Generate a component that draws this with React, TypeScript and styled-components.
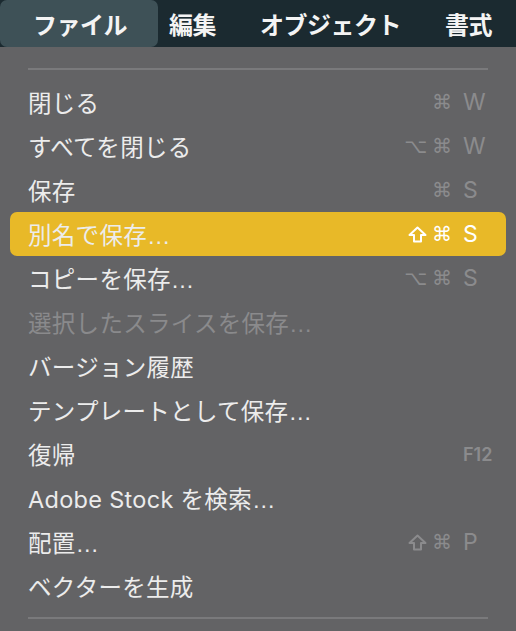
import React from "react";
import styled, { createGlobalStyle } from "styled-components";

const GlobalStyle = createGlobalStyle`
  html, body {
    margin: 0;
    padding: 0;
    background: #636365;
    overflow: hidden;
  }
  body {
    font-family: "Inter", "Noto Sans CJK JP", sans-serif;
  }
`;

const Page = styled.div`
  width: 516px;
  height: 631px;
  background: #636365;
  display: flex;
  flex-direction: column;
`;

// top menu bar
const MenuBar = styled.div`
  height: 47px;
  background: #1b2a30;
  display: flex;
  align-items: stretch;
`;

const BarItem = styled.div<{ $active?: boolean }>`
  display: flex;
  align-items: center;
  padding: ${(p) => (p.$active ? "0 31px 0 33px" : "0")};
  margin-right: ${(p) => (p.$active ? "11px" : "44px")};
  background: ${(p) => (p.$active ? "#3e5157" : "transparent")};
  border-radius: 7px;
  color: #f4f4f4;
  font-family: "Noto Sans CJK JP", sans-serif;
  font-size: 24px;
  font-weight: 600;
  letter-spacing: -0.5px;
  white-space: nowrap;
`;

// dropdown
const Menu = styled.div`
  flex: 1;
  padding: 21px 10px 0;
  display: flex;
  flex-direction: column;
`;

const Separator = styled.div<{ $top?: boolean }>`
  height: 2px;
  margin: ${(p) => (p.$top ? "0 18px 10px" : "9px 18px 0")};
  background: #7a7a7c;
`;

const Row = styled.div<{ $selected?: boolean; $disabled?: boolean }>`
  height: 44px;
  padding: 0 13px 0 18px;
  display: flex;
  align-items: center;
  justify-content: space-between;
  border-radius: 7px;
  background: ${(p) => (p.$selected ? "#e8b928" : "transparent")};
  color: ${(p) => (p.$disabled ? "#8a8a8c" : "#ececec")};
`;

const Label = styled.span`
  font-family: "Inter", "Noto Sans CJK JP", sans-serif;
  font-size: 23.5px;
  letter-spacing: 0.3px;
  white-space: nowrap;
`;

const Dots = styled.span`
  font-family: "Liberation Sans", sans-serif;
`;

const Shortcut = styled.div<{ $selected?: boolean }>`
  display: flex;
  align-items: center;
  color: ${(p) => (p.$selected ? "#ffffff" : "#8b8b8d")};
`;

const Mods = styled.span`
  display: flex;
  align-items: center;
  gap: 5px;
  margin-right: 11px;
`;

const ModGlyph = styled.span`
  font-family: "DejaVu Sans", sans-serif;
  font-size: 20px;
  line-height: 1;
`;

const ShiftIcon = styled.svg`
  width: 19px;
  height: 17px;
  display: block;
`;

const Key = styled.span<{ $small?: boolean }>`
  width: 30px;
  font-family: "Inter", sans-serif;
  font-size: ${(p) => (p.$small ? "18px" : "23px")};
  font-weight: ${(p) => (p.$small ? 600 : 400)};
  text-align: left;
`;

type Item = {
  label: string;
  dots?: boolean;
  mods?: string[];
  keyName?: string;
  selected?: boolean;
  disabled?: boolean;
};

const items: Item[] = [
  { label: "閉じる", mods: ["⌘"], keyName: "W" },
  { label: "すべてを閉じる", mods: ["⌥", "⌘"], keyName: "W" },
  { label: "保存", mods: ["⌘"], keyName: "S" },
  { label: "別名で保存", dots: true, mods: ["shift", "⌘"], keyName: "S", selected: true },
  { label: "コピーを保存", dots: true, mods: ["⌥", "⌘"], keyName: "S" },
  { label: "選択したスライスを保存", dots: true, disabled: true },
  { label: "バージョン履歴" },
  { label: "テンプレートとして保存", dots: true },
  { label: "復帰", keyName: "F12" },
  { label: "Adobe Stock を検索", dots: true },
  { label: "配置", dots: true, mods: ["shift", "⌘"], keyName: "P" },
  { label: "ベクターを生成" },
];

const barItems = ["ファイル", "編集", "オブジェクト", "書式"];

const Modifier = ({ name }: { name: string }) =>
  name === "shift" ? (
    <ShiftIcon viewBox="0 0 19 17">
      <path
        d="M9.5 1.5 L17.5 9 H13 V15.5 H6 V9 H1.5 Z"
        fill="none"
        stroke="currentColor"
        strokeWidth="2"
        strokeLinejoin="round"
      />
    </ShiftIcon>
  ) : (
    <ModGlyph>{name}</ModGlyph>
  );

export default function App() {
  return (
    <Page>
      <GlobalStyle />
      <MenuBar>
        {barItems.map((t, i) => (
          <BarItem key={t} $active={i === 0}>
            {t}
          </BarItem>
        ))}
      </MenuBar>
      <Menu>
        <Separator $top />
        {items.map((it) => (
          <Row key={it.label} $selected={it.selected} $disabled={it.disabled}>
            <Label>
              {it.label}
              {it.dots && <Dots>…</Dots>}
            </Label>
            {it.keyName && (
              <Shortcut $selected={it.selected}>
                {it.mods && (
                  <Mods>
                    {it.mods.map((m) => (
                      <Modifier key={m} name={m} />
                    ))}
                  </Mods>
                )}
                <Key $small={it.keyName === "F12"}>{it.keyName}</Key>
              </Shortcut>
            )}
          </Row>
        ))}
        <Separator />
      </Menu>
    </Page>
  );
}
